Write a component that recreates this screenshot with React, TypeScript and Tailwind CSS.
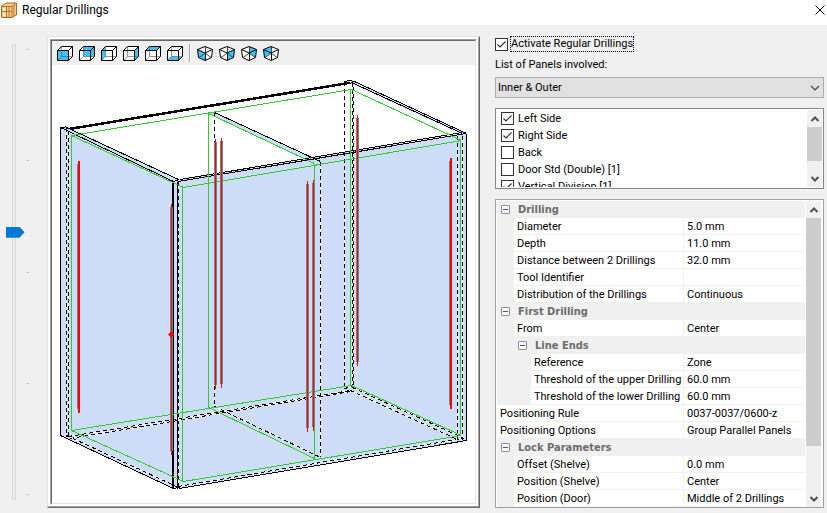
import { useState } from "react";

type Point = [number, number];

const panels = [
  { name: "Left Side", checked: true },
  { name: "Right Side", checked: true },
  { name: "Back", checked: false },
  { name: "Door Std (Double) [1]", checked: false },
  { name: "Vertical Division [1]", checked: true },
];

interface Row {
  level: 0 | 1 | 2;
  name: string;
  value?: string;
  group?: boolean;
}

const rows: Row[] = [
  { level: 0, name: "Drilling", group: true },
  { level: 1, name: "Diameter", value: "5.0 mm" },
  { level: 1, name: "Depth", value: "11.0 mm" },
  { level: 1, name: "Distance between 2 Drillings", value: "32.0 mm" },
  { level: 1, name: "Tool Identifier", value: "" },
  { level: 1, name: "Distribution of the Drillings", value: "Continuous" },
  { level: 0, name: "First Drilling", group: true },
  { level: 1, name: "From", value: "Center" },
  { level: 1, name: "Line Ends", group: true },
  { level: 2, name: "Reference", value: "Zone" },
  { level: 2, name: "Threshold of the upper Drilling", value: "60.0 mm" },
  { level: 2, name: "Threshold of the lower Drilling", value: "60.0 mm" },
  { level: 0, name: "Positioning Rule", value: "0037-0037/0600-z" },
  { level: 0, name: "Positioning Options", value: "Group Parallel Panels" },
  { level: 0, name: "Lock Parameters", group: true },
  { level: 1, name: "Offset (Shelve)", value: "0.0 mm" },
  { level: 1, name: "Position (Shelve)", value: "Center" },
  { level: 1, name: "Position (Door)", value: "Middle of 2 Drillings" },
];

// Highlighted face of each view button
const boxViews = [
  { name: "Front", face: "0.5,4.5 11.5,4.5 11.5,14.5 0.5,14.5" },
  { name: "Back", face: "4.5,0.5 15.5,0.5 15.5,10.5 4.5,10.5" },
  { name: "Left", face: "0.5,4.5 4.5,0.5 4.5,10.5 0.5,14.5" },
  { name: "Right", face: "11.5,4.5 15.5,0.5 15.5,10.5 11.5,14.5" },
  { name: "Top", face: "0.5,4.5 4.5,0.5 15.5,0.5 11.5,4.5" },
  { name: "Bottom", face: "0.5,14.5 4.5,10.5 15.5,10.5 11.5,14.5" },
];

const cornerViews = [
  { name: "Front left", face: "0.5,3.5 8,7 8,14.5 1.5,11.5" },
  { name: "Front right", face: "15.5,3.5 8,7 8,14.5 14.5,11.5" },
  { name: "Back right", face: "8,0.5 15.5,3.5 14.5,11.5 8,7" },
  { name: "Back left", face: "8,0.5 0.5,3.5 1.5,11.5 8,7" },
];

const greenLines: [Point, Point][] = [
  [[71, 135], [351, 89]],
  [[71, 135], [183, 187]],
  [[71, 135], [71, 430]],
  [[71, 430], [351, 385]],
  [[350, 89], [350, 385]],
  [[351, 89], [461, 140]],
  [[460, 140], [460, 435]],
  [[461, 140], [183, 187]],
  [[182, 187], [182, 481]],
  [[71, 430], [183, 481]],
  [[183, 481], [461, 435]],
  [[351, 385], [461, 435]],
  [[208, 113], [208, 407]],
  [[208, 113], [314, 163]],
  [[314, 163], [314, 458]],
  [[208, 407], [314, 458]],
];

const dashedLines: [Point, Point][] = [
  [[66, 127], [66, 436]],
  [[68, 130], [68, 437]],
  [[178, 181], [178, 487]],
  [[214, 112], [214, 407]],
  [[320, 161], [320, 456]],
  [[344, 81], [344, 388]],
  [[352, 82], [352, 390]],
  [[353, 86], [353, 388]],
  [[457, 135], [457, 438]],
  [[462, 135], [462, 439]],
  [[68, 436], [350, 390]],
  [[70, 438], [350, 391]],
  [[66, 435], [178, 487]],
  [[178, 486], [462, 438]],
  [[352, 387], [464, 438]],
  [[350, 390], [457, 439]],
  [[214, 406], [320, 457]],
  [[344, 388], [352, 386]],
];

const solidLines: [Point, Point][] = [
  [[60, 128], [60, 435]],
  [[60, 128], [66, 126]],
  [[60, 127], [173, 181]],
  [[66, 127], [178, 179]],
  [[60, 435], [173, 488]],
  [[177, 181], [177, 488]],
  [[173, 181], [179, 179]],
  [[172, 488], [180, 487]],
  [[178, 181], [466, 133]],
  [[180, 179], [462, 132]],
  [[466, 133], [466, 440]],
  [[179, 488], [466, 440]],
  [[344, 81], [349, 80]],
  [[349, 80], [354, 81]],
  [[351, 82], [462, 133]],
  [[354, 81], [466, 133]],
  [[214, 112], [320, 161]],
];

// x, top, bottom, thickness of the red core
const drillings = [
  { x: 78, top: 161, bottom: 413, core: 2 },
  { x: 171, top: 204, bottom: 455, core: 1 },
  { x: 215, top: 139, bottom: 389, core: 1 },
  { x: 221, top: 138, bottom: 388, core: 1 },
  { x: 307, top: 181, bottom: 432, core: 1 },
  { x: 313, top: 180, bottom: 431, core: 1 },
  { x: 357, top: 115, bottom: 366, core: 1 },
  { x: 450, top: 158, bottom: 409, core: 2 },
];

function Line({ from, to, ...rest }: { from: Point; to: Point } & React.SVGProps<SVGLineElement>) {
  return (
    <line x1={from[0] + 0.5} y1={from[1] + 0.5} x2={to[0] + 0.5} y2={to[1] + 0.5} {...rest} />
  );
}

function CabinetDrawing() {
  return (
    <svg
      viewBox="52 65 423 438"
      className="h-0 w-full grow bg-white"
      shapeRendering="crispEdges"
      role="img"
      aria-label="Cabinet preview"
    >
      <g fill="#cdddf8">
        <polygon points="60,128 66,126 178,179 466,133 466,440 178,488 173,488 60,435" />
        <polygon points="344,81 349,80 354,81 466,133 461,134 350,83" />
        <polygon points="208,113 214,112 320,161 314,163" />
      </g>
      <Line from={[70, 128]} to={[350, 82]} stroke="#000" strokeWidth="2" />
      <Line from={[70, 129]} to={[350, 83]} stroke="#000" />
      {dashedLines.map(([a, b], i) => (
        <g key={i}>
          <Line from={a} to={b} stroke="#fff" />
          <Line from={a} to={b} stroke="#000" strokeDasharray="4 3" />
        </g>
      ))}
      {solidLines.map(([a, b], i) => (
        <Line key={i} from={a} to={b} stroke="#000" />
      ))}
      <rect x="172" y="181" width="2" height="307" fill="#000" />
      {greenLines.map(([a, b], i) => (
        <Line key={i} from={a} to={b} stroke="#2fcb2f" />
      ))}
      {drillings.map((d) => (
        <g key={d.x}>
          <rect x={d.x - 1} y={d.top + 3} width="3" height={d.bottom - d.top - 7} fill="#7f7f7f" />
          <rect x={d.x} y={d.top} width={d.core} height={d.bottom - d.top} fill={d.core === 2 ? "#ff0000" : "#e01010"} />
        </g>
      ))}
      <polygon points="168,334 170,332 172,332 174,334 172,337 170,337" fill="#ff0000" />
    </svg>
  );
}

function BoxIcon({ face }: { face: string }) {
  return (
    <svg viewBox="0 0 16 15" className="h-[15px] w-4" fill="none">
      <polygon points="0.5,4.5 4.5,0.5 15.5,0.5 15.5,10.5 11.5,14.5 0.5,14.5" fill="#fff" />
      <polygon points={face} fill="#3cc4fa" />
      <path d="M4.5 1V10.5H15M1 14L4.5 10.5" stroke="#666" strokeOpacity="0.7" />
      <path d="M0.5 4.5H11.5V14.5H0.5ZM0.5 4.5L4.5 0.5H15.5V10.5L11.5 14.5M11.5 4.5L15.5 0.5" stroke="#000" />
    </svg>
  );
}

function CornerIcon({ face }: { face: string }) {
  return (
    <svg viewBox="0 0 16 15" className="h-[15px] w-4" fill="none">
      <polygon points="8,0.5 15.5,3.5 14.5,11.5 8,14.5 1.5,11.5 0.5,3.5" fill="#fff" />
      <polygon points={face} fill="#3cc4fa" />
      <path d="M8.5 1V7L2 11.5M8 7L14 11.5" stroke="#444" />
      <path d="M8 0.5L15.5 3.5L14.5 11.5L8 14.5L1.5 11.5L0.5 3.5ZM0.5 3.5L8 7L15.5 3.5M8.5 7V14.5" stroke="#000" />
    </svg>
  );
}

function Chevron({ up = false }: { up?: boolean }) {
  return (
    <svg viewBox="0 0 10 6" className="h-[6px] w-[10px]" fill="none">
      <path d={up ? "M1.5 5L5 1.5L8.5 5" : "M1.5 1L5 4.5L8.5 1"} stroke="#505050" strokeWidth="2" />
    </svg>
  );
}

function Scrollbar({ thumb }: { thumb: string }) {
  return (
    <div className="flex w-[15px] shrink-0 flex-col bg-[#f0f0f0]">
      <button type="button" aria-label="Scroll up" className="flex h-[17px] shrink-0 items-center justify-center">
        <Chevron up />
      </button>
      <div className="min-h-0 flex-1">
        <div className={`${thumb} bg-[#cdcdcd]`} />
      </div>
      <button type="button" aria-label="Scroll down" className="flex h-[17px] shrink-0 items-center justify-center">
        <Chevron />
      </button>
    </div>
  );
}

function CheckBox({ id, defaultChecked }: { id: string; defaultChecked: boolean }) {
  return (
    <span className="grid size-[13px] shrink-0">
      <input
        id={id}
        type="checkbox"
        defaultChecked={defaultChecked}
        className="peer col-start-1 row-start-1 size-[13px] appearance-none border border-[#333] bg-white"
      />
      <svg
        viewBox="0 0 13 13"
        className="pointer-events-none invisible col-start-1 row-start-1 size-[13px] peer-checked:visible"
        fill="none"
      >
        <path d="M2.5 6.5L5 9L10.5 3.5" stroke="#333" strokeWidth="1.2" />
      </svg>
    </span>
  );
}

function PropertyRow({ row }: { row: Row }) {
  const gutters = row.group ? row.level + 1 : row.level;
  const toggle = (
    <button
      type="button"
      aria-label={`Collapse ${row.name}`}
      className="mx-auto flex size-[9px] items-center justify-center rounded-[1px] border border-[#919191] bg-white"
    >
      <span className="h-px w-[5px] bg-[#3a56a8]" />
    </button>
  );

  return (
    <tr className="h-[17px]">
      {Array.from({ length: gutters }, (_, i) => (
        <td key={i} className="bg-[#f0f0f0] p-0">
          {row.group && i === row.level && toggle}
        </td>
      ))}
      {row.group ? (
        <th colSpan={4 - gutters} scope="colgroup" className="bg-[#f0f0f0] p-0 pl-1 text-left font-['DejaVu_Sans_Condensed','DejaVu_Sans',sans-serif] text-[11px] leading-none font-bold text-[#6d6d6d]">
          {row.name}
        </th>
      ) : (
        <>
          <th colSpan={3 - gutters} scope="row" className="border-r border-b border-[#f0f0f0] bg-white p-0 pl-[3px] text-left font-normal">
            {row.name}
          </th>
          <td className="border-b border-[#f0f0f0] bg-white p-0 pl-[3px]">{row.value}</td>
        </>
      )}
    </tr>
  );
}

export default function App() {
  const [zoom, setZoom] = useState(41);

  return (
    <div className="flex min-h-screen flex-col bg-[#f0f0f0] font-[Roboto,'Open_Sans',sans-serif] text-[11px] leading-4 text-black">
      <header className="flex h-[25px] shrink-0 items-center bg-white pr-[2px] pb-[6px] pl-[1px]">
        <svg viewBox="0 0 16 16" className="size-4" fill="none">
          <path d="M0.5 4L5 1H15.5V13L11 15.5H0.5Z" fill="#f3cf86" stroke="#a8692a" />
          <path d="M0.5 4.5H11V15M11 4.5L15 1.5M5.5 5V15M1 9.5H11M8 5V15M13 3V14" stroke="#b87430" />
          <path d="M2 6H4.5V8.5H2ZM2 11H4.5V14H2Z" fill="#fff3c9" />
        </svg>
        <h1 className="ml-[5px] flex-1 text-xs font-normal">Regular Drillings</h1>
        <button type="button" aria-label="Close" className="size-[10px]">
          <svg viewBox="0 0 10 10" className="size-[10px]">
            <path d="M0.5 0.5L9.5 9.5M9.5 0.5L0.5 9.5" stroke="#000" />
          </svg>
        </button>
      </header>

      <main className="flex flex-1 pt-[11px] pr-[3px] pb-[5px] pl-[5px]">
        <div className="flex w-[42px] shrink-0 gap-1 pt-2 pb-2">
          <input
            type="range"
            aria-label="Zoom"
            value={zoom}
            onChange={(e) => setZoom(Number(e.target.value))}
            className="h-auto w-[17px] appearance-none bg-transparent [writing-mode:vertical-lr] [&::-webkit-slider-runnable-track]:h-full [&::-webkit-slider-runnable-track]:w-1 [&::-webkit-slider-runnable-track]:border [&::-webkit-slider-runnable-track]:border-[#d6d9d9] [&::-webkit-slider-runnable-track]:bg-[#e9ecec] [&::-webkit-slider-thumb]:-ml-[7px] [&::-webkit-slider-thumb]:h-[11px] [&::-webkit-slider-thumb]:w-[19px] [&::-webkit-slider-thumb]:appearance-none [&::-webkit-slider-thumb]:bg-[#0078d7] [&::-webkit-slider-thumb]:[clip-path:polygon(0_0,14px_0,100%_50%,14px_100%,0_100%)]"
          />
          <div className="flex flex-col justify-between py-[5px]">
            {[0, 1, 2, 3, 4].map((tick) => (
              <span key={tick} className="h-px w-[3px] bg-[#c4c4c4]" />
            ))}
          </div>
        </div>

        <section className="flex min-w-0 flex-1 border border-t-[#e3e3e3] border-r-[#696969] border-b-[#696969] border-l-[#e3e3e3]">
          <div className="flex flex-1 border border-t-white border-r-[#a0a0a0] border-b-[#a0a0a0] border-l-white bg-white p-px">
            <div className="flex flex-1 border border-t-[#a0a0a0] border-r-white border-b-white border-l-[#a0a0a0]">
              <div className="flex flex-1 flex-col border border-t-[#696969] border-r-[#e3e3e3] border-b-[#e3e3e3] border-l-[#696969]">
                <div className="flex h-6 shrink-0 items-center gap-[6px] bg-[#f0f0f0] px-[5px]">
                  {boxViews.map((view) => (
                    <button key={view.name} type="button" aria-label={view.name}>
                      <BoxIcon face={view.face} />
                    </button>
                  ))}
                  <span className="h-[18px] w-[2px] border-r border-l border-r-white border-l-[#a0a0a0]" />
                  {cornerViews.map((view) => (
                    <button key={view.name} type="button" aria-label={view.name}>
                      <CornerIcon face={view.face} />
                    </button>
                  ))}
                </div>
                <CabinetDrawing />
              </div>
            </div>
          </div>
        </section>

        <section className="ml-[15px] flex w-[329px] shrink-0 flex-col">
          <div className="flex h-4 items-center gap-[2px]">
            <CheckBox id="activate" defaultChecked />
            <label htmlFor="activate" className="border border-dotted border-black leading-[14px]">
              Activate Regular Drillings
            </label>
          </div>
          <label htmlFor="panel-filter" className="mt-[5px] mb-1">
            List of Panels involved:
          </label>
          <div className="grid h-[21px] items-center">
            <select
              id="panel-filter"
              className="col-start-1 row-start-1 h-[21px] w-full appearance-none border border-[#adadad] bg-[#e1e1e1] pl-[2px]"
            >
              <option>Inner &amp; Outer</option>
            </select>
            <svg viewBox="0 0 10 6" className="pointer-events-none col-start-1 row-start-1 mr-1 h-[6px] w-[10px] justify-self-end" fill="none">
              <path d="M1 1L5 5L9 1" stroke="#444" strokeWidth="1.2" />
            </svg>
          </div>

          <div className="mt-[10px] flex h-[81px] shrink-0 border border-[#828790] bg-white p-px">
            <ul className="min-w-0 flex-1 overflow-hidden pl-1">
              {panels.map((panel, i) => (
                <li key={panel.name} className="flex h-[17px] items-center gap-1">
                  <CheckBox id={`panel-${i}`} defaultChecked={panel.checked} />
                  <label htmlFor={`panel-${i}`}>{panel.name}</label>
                </li>
              ))}
            </ul>
            <Scrollbar thumb="h-[34px]" />
          </div>

          <div className="mt-[10px] flex flex-1 border border-[#a0a0a0] bg-white">
            <div className="min-w-0 flex-1 pt-px pl-px">
              <table className="w-full table-fixed border-separate border-spacing-0 leading-none whitespace-nowrap">
                <colgroup>
                  <col className="w-[17px]" />
                  <col className="w-[17px]" />
                  <col className="w-[153px]" />
                  <col />
                </colgroup>
                <tbody>
                  {rows.map((row) => (
                    <PropertyRow key={row.name} row={row} />
                  ))}
                </tbody>
              </table>
            </div>
            <div className="flex border-l border-white pt-px pr-[2px]">
              <Scrollbar thumb="h-[84%]" />
            </div>
          </div>
        </section>
      </main>
    </div>
  );
}
